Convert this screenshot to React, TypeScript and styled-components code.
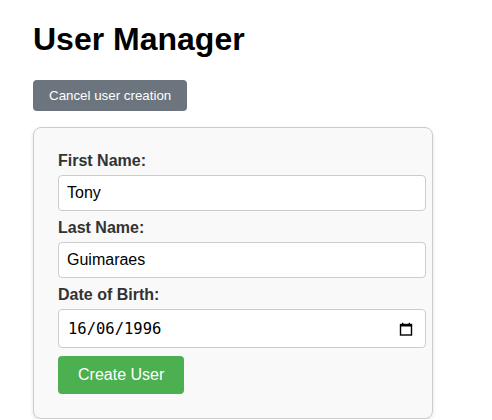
import React from "react";
import styled, { createGlobalStyle } from "styled-components";

const Global = createGlobalStyle`
  html, body { margin: 0; padding: 0; background: #fff; }
  body { font-family: "Liberation Sans", Arial, sans-serif; }
`;

const Page = styled.div`
  padding: 0 33px;
  display: flow-root;
`;

const Title = styled.h1`
  font-size: 32px;
  font-weight: bold;
  margin: 21px 0 22px;
  color: #000;
`;

const Button = styled.button<{ $variant: "secondary" | "primary" }>`
  border: none;
  border-radius: 4px;
  cursor: pointer;
  font-family: "Liberation Sans", Arial, sans-serif;
  color: #fff;
  background: ${(p) => (p.$variant === "primary" ? "#4caf50" : "#6c757d")};
  font-size: ${(p) => (p.$variant === "primary" ? "16px" : "13.333px")};
  padding: ${(p) => (p.$variant === "primary" ? "10px 20px" : "8px 16px")};
  align-self: flex-start;
`;

const Card = styled.form`
  margin-top: 16px;
  width: 350px;
  padding: 24px;
  background: #f9f9f9;
  border: 1px solid #ccc;
  border-radius: 8px;
  box-shadow: 0 2px 4px rgba(0, 0, 0, 0.1);
  display: flex;
  flex-direction: column;
`;

const Field = styled.div`
  display: flex;
  flex-direction: column;
  margin-bottom: 8px;
`;

const Label = styled.label`
  font-weight: bold;
  font-size: 16px;
  color: #333;
  margin-bottom: 5px;
`;

const Input = styled.input`
  box-sizing: content-box;
  width: 100%;
  padding: 8px;
  font-size: 16px;
  font-family: "Liberation Sans", Arial, sans-serif;
  border: 1px solid #ccc;
  border-radius: 4px;
  background: #fff;
  color: #000;
`;

const DateBox = styled.div`
  box-sizing: content-box;
  width: 100%;
  height: 37px;
  padding: 0 8px;
  border: 1px solid #ccc;
  border-radius: 4px;
  background: #fff;
  display: flex;
  align-items: center;
`;

const DateText = styled.input`
  flex: 1;
  min-width: 0;
  border: none;
  outline: none;
  padding: 0 0 0 1px;
  background: transparent;
  font-family: "DejaVu Sans Mono", monospace;
  font-size: 15.5px;
  color: #000;
`;

const CalendarIcon = styled.svg`
  flex: none;
  margin-right: 4px;
  width: 14px;
  height: 14px;
`;

export default function App() {
  return (
    <Page>
      <Global />
      <Title>User Manager</Title>
      <Button type="button" $variant="secondary">Cancel user creation</Button>
      <Card onSubmit={(e) => e.preventDefault()}>
        <Field>
          <Label>First Name:</Label>
          <Input type="text" defaultValue="Tony" />
        </Field>
        <Field>
          <Label>Last Name:</Label>
          <Input type="text" defaultValue="Guimaraes" />
        </Field>
        <Field>
          <Label>Date of Birth:</Label>
          <DateBox>
            <DateText type="text" defaultValue="16/06/1996" />
            <CalendarIcon viewBox="0 0 14 14" aria-hidden="true">
              <rect x="1.5" y="2.5" width="11" height="10.5" fill="none" stroke="#000" strokeWidth="1.4" />
              <rect x="1" y="2" width="12" height="2.5" fill="#000" />
              <rect x="3" y="0.8" width="1.4" height="2" fill="#000" />
              <rect x="9.6" y="0.8" width="1.4" height="2" fill="#000" />
            </CalendarIcon>
          </DateBox>
        </Field>
        <Button type="submit" $variant="primary">Create User</Button>
      </Card>
    </Page>
  );
}
